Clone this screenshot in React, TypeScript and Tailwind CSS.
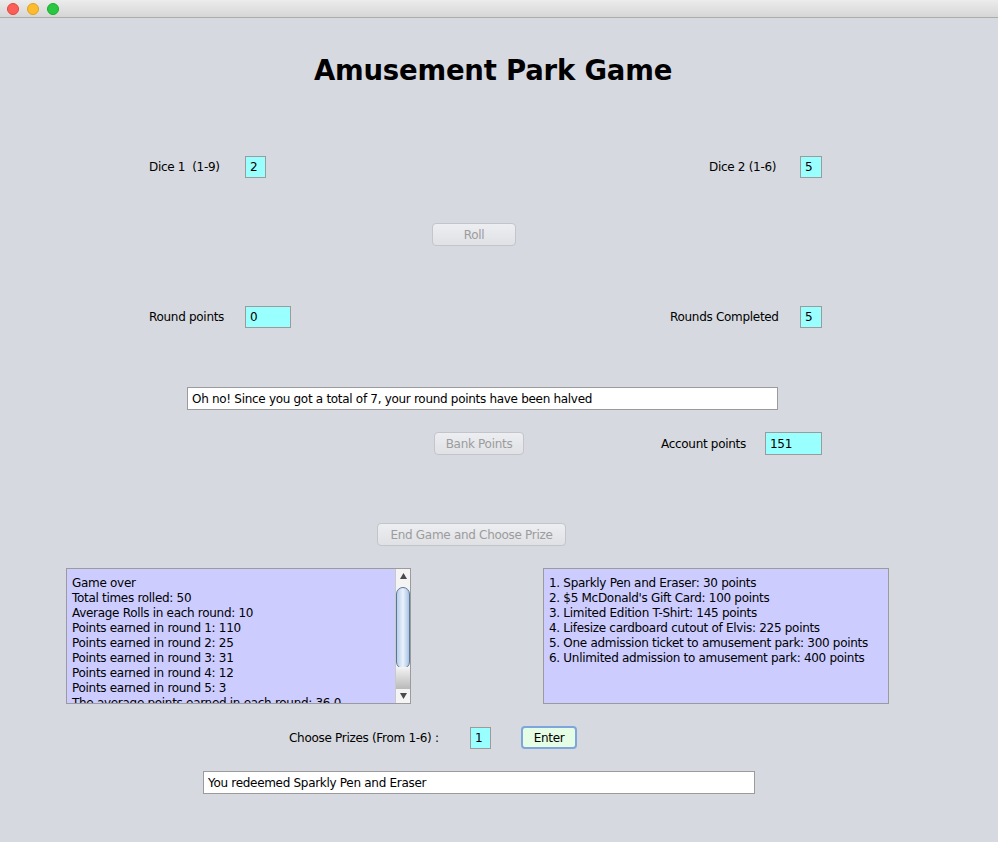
import React from "react";

const font = "font-['DejaVu_Sans',sans-serif]";

const Field = ({ value, w, white }: { value: string; w: string; white?: boolean }) => (
  <div
    className={`${w} h-[22px] border border-[#9b9b9b] ${white ? "bg-white" : "bg-[#99ffff]"} pl-[4px] flex items-center text-[12px] text-black whitespace-nowrap overflow-hidden`}
  >
    {value}
  </div>
);

const AquaButton = ({ label, w }: { label: string; w: string }) => (
  <div
    className={`${w} h-[23px] rounded-[4px] border border-[#c3c5ca] bg-gradient-to-b from-[#eceef1] to-[#dfe1e5] flex items-center justify-center text-[12px] text-[#9c9c9c]`}
  >
    {label}
  </div>
);

const stats = [
  "Game over",
  "Total times rolled: 50",
  "Average Rolls in each round: 10",
  "Points earned in round 1: 110",
  "Points earned in round 2: 25",
  "Points earned in round 3: 31",
  "Points earned in round 4: 12",
  "Points earned in round 5: 3",
  "The average points earned in each round: 36.0",
];

const prizes = [
  "1. Sparkly Pen and Eraser: 30 points",
  "2. $5 McDonald's Gift Card: 100 points",
  "3. Limited Edition T-Shirt: 145 points",
  "4. Lifesize cardboard cutout of Elvis: 225 points",
  "5. One admission ticket to amusement park: 300 points",
  "6. Unlimited admission to amusement park: 400 points",
];

const ScrollBar = () => (
  <div className="w-[15px] h-full flex flex-col bg-[#f4f4f4] border-l border-[#c9c9c9]">
    <div className="h-[14px] flex items-center justify-center">
      <svg width="7" height="6" viewBox="0 0 7 6">
        <path d="M3.5 0 L7 6 L0 6 Z" fill="#4a4a4a" />
      </svg>
    </div>
    <div className="flex-1 relative">
      <div className="absolute left-0 right-0 top-[4px] h-[82px] rounded-[7px] border border-[#5f7594] bg-gradient-to-r from-[#b7cfeb] via-[#eaf2fc] to-[#a9c3e3]" />
      <div className="absolute left-0 right-0 bottom-0 h-[22px] bg-gradient-to-b from-[#f4f4f4] to-[#b9b9b9]" />
    </div>
    <div className="h-[14px] flex items-center justify-center">
      <svg width="7" height="6" viewBox="0 0 7 6">
        <path d="M0 0 L7 0 L3.5 6 Z" fill="#4a4a4a" />
      </svg>
    </div>
  </div>
);

export default function App() {
  return (
    <div className={`w-[998px] h-[842px] bg-[#d6d9df] text-black ${font} tracking-[-0.3px] overflow-hidden`}>
      {/* title bar */}
      <div className="h-[18px] bg-gradient-to-b from-[#ececec] to-[#d6d6d6] border-b border-[#acacac] flex items-center gap-[8px] pl-[7px]">
        <div className="w-[12px] h-[12px] rounded-full bg-[#fc5f57] border border-[#e0443e]" />
        <div className="w-[12px] h-[12px] rounded-full bg-[#fdbc2e] border border-[#dea123]" />
        <div className="w-[12px] h-[12px] rounded-full bg-[#29c840] border border-[#1aab29]" />
      </div>

      <div className="flex flex-col text-[12px]">
        <div className="mt-[29px] h-[48px] flex items-center justify-center pr-[12px] text-[27.5px] font-bold tracking-[-0.2px]">
          Amusement Park Game
        </div>

        {/* dice */}
        <div className="mt-[61px] h-[22px] flex items-center">
          <div className="ml-[149px] w-[96px] whitespace-pre">Dice 1  (1-9)</div>
          <Field value="2" w="w-[21px]" />
          <div className="ml-[443px] w-[91px] whitespace-pre">Dice 2 (1-6)</div>
          <Field value="5" w="w-[22px]" />
        </div>

        <div className="mt-[45px] flex">
          <div className="ml-[432px]">
            <AquaButton label="Roll" w="w-[84px]" />
          </div>
        </div>

        <div className="mt-[60px] h-[22px] flex items-center">
          <div className="ml-[149px] w-[96px]">Round points</div>
          <Field value="0" w="w-[46px]" />
          <div className="ml-[379px] w-[130px]">Rounds Completed</div>
          <Field value="5" w="w-[22px]" />
        </div>

        <div className="mt-[59px] flex">
          <div className="ml-[187px]">
            <div className="w-[591px] h-[23px] border border-[#9b9b9b] bg-white pl-[4px] flex items-center">
              Oh no! Since you got a total of 7, your round points have been halved
            </div>
          </div>
        </div>

        <div className="mt-[22px] h-[23px] flex items-center">
          <div className="ml-[434px]">
            <AquaButton label="Bank Points" w="w-[90px]" />
          </div>
          <div className="ml-[137px] w-[104px]">Account points</div>
          <div className="w-[57px] h-[23px] border border-[#9b9b9b] bg-[#99ffff] pl-[4px] flex items-center">151</div>
        </div>

        <div className="mt-[68px] flex">
          <div className="ml-[377px]">
            <AquaButton label="End Game and Choose Prize" w="w-[189px]" />
          </div>
        </div>

        {/* text areas */}
        <div className="mt-[22px] h-[136px] flex">
          <div className="ml-[66px] w-[345px] h-full border border-[#9b9b9b] bg-[#ccccff] flex overflow-hidden">
            <div className="flex-1 pl-[5px] pt-[7px] leading-[15px] overflow-hidden whitespace-nowrap">
              {stats.map((s) => (
                <div key={s}>{s}</div>
              ))}
            </div>
            <ScrollBar />
          </div>
          <div className="ml-[132px] w-[346px] h-full border border-[#9b9b9b] bg-[#ccccff] pl-[5px] pt-[7px] leading-[15px] whitespace-nowrap overflow-hidden">
            {prizes.map((p) => (
              <div key={p}>{p}</div>
            ))}
          </div>
        </div>

        <div className="mt-[22px] h-[23px] flex items-center">
          <div className="ml-[289px] w-[181px]">Choose Prizes (From 1-6) :</div>
          <Field value="1" w="w-[21px]" />
          <div className="ml-[30px] w-[56px] h-[23px] rounded-[4px] border-2 border-[#7ea6dc] bg-[#e4fde4] flex items-center justify-center">
            Enter
          </div>
        </div>

        <div className="mt-[22px] flex">
          <div className="ml-[203px] w-[552px] h-[23px] border border-[#9b9b9b] bg-white pl-[4px] flex items-center">
            You redeemed Sparkly Pen and Eraser
          </div>
        </div>
      </div>
    </div>
  );
}
